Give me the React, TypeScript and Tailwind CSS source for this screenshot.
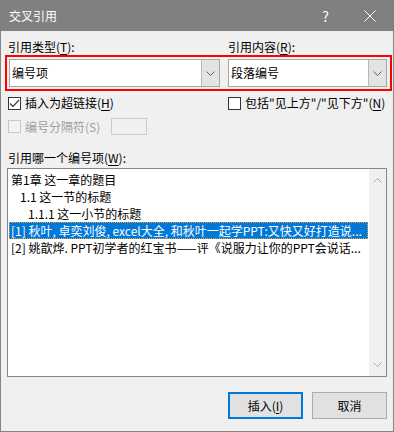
import type { ReactNode } from 'react';

function Mn({ children }: { children: ReactNode }) {
    return <span className="underline underline-offset-[2px]">{children}</span>;
}

function Chevron({ up = false, color = '#606060' }: { up?: boolean; color?: string }) {
    return (
        <svg width="9" height="5" viewBox="0 0 9 5" className={up ? 'rotate-180' : ''}>
            <path d="M0.5 0.5 L4.5 4.5 L8.5 0.5" stroke={color} strokeWidth="1" fill="none" />
        </svg>
    );
}

function Combo({ value, width }: { value: string; width: string }) {
    return (
        <div className={`flex h-[28px] border border-[#a8a8a8] bg-white ${width}`}>
            <div className="flex flex-1 items-center pl-[2px] text-[12px] text-black">{value}</div>
            <div className="flex w-[18px] items-center justify-center border-l border-[#b8b8b8] bg-[#e3e3e3]">
                <Chevron />
            </div>
        </div>
    );
}

function Check({ checked = false, disabled = false }: { checked?: boolean; disabled?: boolean }) {
    return (
        <div
            className={`flex h-[13px] w-[13px] items-center justify-center border ${
                disabled ? 'border-[#c8c8c8] bg-[#f3f3f3]' : 'border-[#333333] bg-white'
            }`}
        >
            {checked && (
                <svg width="11" height="9" viewBox="0 0 11 9">
                    <path d="M1 4.5 L4 7.5 L10 1" stroke="#333333" strokeWidth="1.2" fill="none" />
                </svg>
            )}
        </div>
    );
}

const items = [
    { text: '第1章 这一章的题目', indent: 'pl-[2px]' },
    { text: '1.1 这一节的标题', indent: 'pl-[11px]' },
    { text: '1.1.1 这一小节的标题', indent: 'pl-[19px]' },
    { text: '[1] 秋叶, 卓奕刘俊, excel大全, 和秋叶一起学PPT:又快又好打造说...', indent: 'pl-[2px]', selected: true },
    { text: '[2] 姚歆烨. PPT初学者的红宝书——评《说服力让你的PPT会说话...', indent: 'pl-[2px]' },
];

export default function App() {
    return (
        <div className="flex h-[432px] w-[394px] flex-col bg-[#f0f0f0] font-['Noto_Sans_CJK_SC',sans-serif] text-[12px] leading-[16px] text-black">
            {/* Title bar */}
            <div className="flex h-[31px] items-center bg-[#808080] pl-[9px] text-white">
                <span className="flex-1">交叉引用</span>
                <span className="mr-[35px] text-[14px]">?</span>
                <svg width="12" height="12" viewBox="0 0 12 12" className="mr-[18px]">
                    <path d="M0.5 0.5 L11.5 11.5 M11.5 0.5 L0.5 11.5" stroke="white" strokeWidth="1" />
                </svg>
            </div>

            {/* Body */}
            <div className="flex flex-1 flex-col border-x border-b border-[#858585] pt-[8px]">
                <div className="flex h-[16px]">
                    <span className="ml-[7px] w-[220px]">
                        引用类型(<Mn>T</Mn>):
                    </span>
                    <span>
                        引用内容(<Mn>R</Mn>):
                    </span>
                </div>

                <div className="ml-[4px] flex h-[36px] w-[387px] gap-[8px] border-2 border-[#ff0000] p-[2px]">
                    <Combo value="编号项" width="w-[211px]" />
                    <Combo value="段落编号" width="w-[159px]" />
                </div>

                <div className="mt-[4px] flex h-[16px] items-center">
                    <div className="ml-[7px] flex w-[220px] items-center gap-[4px]">
                        <Check checked />
                        <span>
                            插入为超链接(<Mn>H</Mn>)
                        </span>
                    </div>
                    <div className="flex items-center gap-[4px]">
                        <Check />
                        <span>
                            包括"见上方"/"见下方"(<Mn>N</Mn>)
                        </span>
                    </div>
                </div>

                <div className="mt-[7px] flex h-[17px] items-center">
                    <div className="ml-[7px] flex w-[103px] items-center gap-[4px] text-[#a0a0a0]">
                        <Check disabled />
                        <span>编号分隔符(S)</span>
                    </div>
                    <div className="h-[17px] w-[36px] border border-[#cccccc] bg-[#f0f0f0]" />
                </div>

                <div className="ml-[7px] mt-[15px] h-[16px]">
                    引用哪一个编号项(<Mn>W</Mn>):
                </div>

                <div className="ml-[6px] mt-[2px] flex h-[209px] w-[380px] border border-[#82878f] bg-white">
                    <div className="flex-1 overflow-hidden pt-[2px]">
                        {items.map((item) => (
                            <div key={item.text} className="px-[1px]">
                                <div
                                    className={`h-[17px] overflow-hidden whitespace-nowrap leading-[17px] ${item.indent} ${
                                        item.selected
                                            ? 'bg-[#0078d7] text-white outline-1 outline-dotted outline-offset-[-1px] outline-[#f0a030]'
                                            : ''
                                    }`}
                                >
                                    {item.text}
                                </div>
                            </div>
                        ))}
                    </div>
                    <div className="flex w-[17px] flex-col items-center justify-between bg-[#f0f0f0] py-[9px]">
                        <Chevron up color="#a8a8a8" />
                        <Chevron color="#a8a8a8" />
                    </div>
                </div>

                <div className="mt-[15px] flex justify-end gap-[9px] pr-[6px]">
                    <button className="h-[27px] w-[75px] border-2 border-[#0078d7] bg-[#e1e1e1] text-black">
                        插入(<Mn>I</Mn>)
                    </button>
                    <button className="h-[27px] w-[75px] border border-[#adadad] bg-[#e1e1e1] text-black">
                        取消
                    </button>
                </div>
            </div>
        </div>
    );
}
